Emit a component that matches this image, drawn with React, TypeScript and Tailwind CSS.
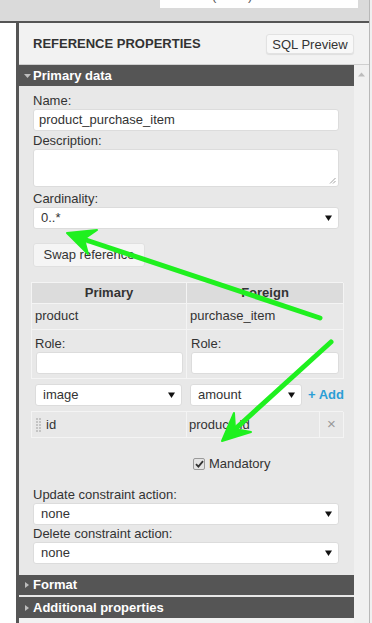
import React from "react";

const Caret = () => (
  <svg width="7" height="6" viewBox="0 0 7 6" className="shrink-0">
    <path d="M0 0.5h7L3.5 6z" fill="#111" />
  </svg>
);

const Select = ({ value, className = "" }: { value: string; className?: string }) => (
  <div
    className={
      "flex h-[22px] shrink-0 items-center justify-between rounded-[3px] border border-[#dcdcdc] bg-white pl-[7px] pr-[6px] " +
      className
    }
  >
    <span>{value}</span>
    <Caret />
  </div>
);

const Label = ({ children, className = "" }: { children: React.ReactNode; className?: string }) => (
  <div className={"h-[16px] leading-[16px] " + className}>{children}</div>
);

const Input = ({ value = "", className = "" }: { value?: string; className?: string }) => (
  <div
    className={
      "flex h-[22px] items-center rounded-[3px] border border-[#dcdcdc] bg-white px-[5px] " + className
    }
  >
    {value}
  </div>
);

const Bar = ({ title, open }: { title: string; open?: boolean }) => (
  <div className="flex h-[20px] items-center bg-[#555] font-bold text-white">
    <span className="flex w-[14px] justify-center pl-[2px]">
      {open ? (
        <svg width="7" height="4" viewBox="0 0 7 4">
          <path d="M0 0h7L3.5 4z" fill="#bdbdbd" />
        </svg>
      ) : (
        <svg width="4" height="6" viewBox="0 0 4 6">
          <path d="M0 0v6L4 3z" fill="#bdbdbd" />
        </svg>
      )}
    </span>
    <span>{title}</span>
  </div>
);

const cell = "border-r border-b border-[#f4f4f4]";

export default function App() {
  return (
    <div className="relative h-[623px] w-[372px] overflow-hidden bg-[#f0f0f0] font-['Liberation_Sans',Arial,sans-serif] text-[13px] text-[#333]">
      <div className="flex h-full">
        <div className="flex w-[369px] flex-col">
          {/* top strip, the field above is scrolled mostly out of view */}
          <div className="h-[21px] bg-[#dadada]">
            <div className="ml-[160px] h-[8px] w-[198px] overflow-hidden bg-white">
              <div className="-mt-[11px] whitespace-nowrap pl-[52px] leading-[14px] text-[#555]">(varch)</div>
            </div>
          </div>
          <div className="h-[2px] bg-[#555]" />
          <div className="flex flex-1">
            <div className="w-[16px] bg-white" />
            <div className="w-[3px] bg-[#555]" />
            <div className="flex flex-1 flex-col bg-[#f2f2f2]">
              {/* header */}
              <div className="flex h-[42px] items-center justify-between border-b border-[#cfcfcf] pl-[14px] pr-[15px]">
                <span className="font-bold">REFERENCE PROPERTIES</span>
                <button className="h-[20px] w-[88px] rounded-[3px] border border-[#e2e2e2] bg-[#f8f8f8] text-[13px] shadow-[0_1px_1px_rgba(0,0,0,0.08)]">
                  SQL Preview
                </button>
              </div>
              <div className="flex flex-1">
                <div className="w-[335px]">
                  <div className="h-[21px] [&>div]:h-[21px]">
                    <Bar title="Primary data" open />
                  </div>
                  <div className="bg-[#e8e8e8] px-[14px] pb-[11px] pt-[7px]">
                    <Label>Name:</Label>
                    <Input value="product_purchase_item" className="w-[306px]" />
                    <Label className="mt-[2px]">Description:</Label>
                    <div className="relative h-[38px] w-[306px] rounded-[3px] border border-[#dcdcdc] bg-white">
                      <svg width="7" height="7" viewBox="0 0 7 7" className="absolute bottom-[2px] right-[2px]">
                        <path d="M1 6.5L6.5 1M4 6.5L6.5 4" stroke="#888" strokeWidth="0.8" />
                      </svg>
                    </div>
                    <Label className="mt-[4px]">Cardinality:</Label>
                    <Select value="0..*" className="w-[306px]" />
                    <button className="mt-[14px] flex h-[24px] w-[112px] items-center justify-center rounded-[3px] border border-[#e0e0e0] bg-[#f5f5f5] text-[13px]">
                      Swap reference
                    </button>

                    {/* table */}
                    <div className="-ml-[2px] mt-[15px] w-[312px] border-l border-t border-[#f4f4f4]">
                      <div className="grid h-[20px] grid-cols-[155px_157px] bg-[#dcdcdc] font-bold">
                        <div className={cell + " flex items-center justify-center"}>Primary</div>
                        <div className={cell + " flex items-center justify-center"}>Foreign</div>
                      </div>
                      <div className="grid h-[27px] grid-cols-[155px_157px]">
                        <div className={cell + " flex items-center pl-[3px]"}>product</div>
                        <div className={cell + " flex items-center pl-[3px]"}>purchase_item</div>
                      </div>
                      <div className="grid h-[49px] grid-cols-[155px_157px]">
                        <div className={cell + " pl-[3px] pr-[4px] pt-[6px]"}>
                          <Label>Role:</Label>
                          <Input className="ml-[1px] w-[147px]" />
                        </div>
                        <div className={cell + " pl-[4px] pr-[4px] pt-[6px]"}>
                          <Label>Role:</Label>
                          <Input className="w-[148px]" />
                        </div>
                      </div>
                    </div>
                    <div className="-ml-[2px] flex h-[32px] w-[312px] items-center">
                      <Select value="image" className="ml-[4px] w-[147px]" />
                      <Select value="amount" className="ml-[8px] w-[112px]" />
                      <span className="ml-[6px] shrink-0 whitespace-nowrap font-bold text-[#2b9ed6]">+ Add</span>
                    </div>
                    <div className="-ml-[2px] grid h-[27px] w-[312px] grid-cols-[155px_133px_24px] border-l border-t border-[#f4f4f4]">
                      <div className={cell + " flex items-center pl-[4px]"}>
                        <span className="grid grid-cols-[2px_2px] gap-x-[1px] gap-y-[1px]">
                          {Array.from({ length: 10 }).map((_, i) => (
                            <span key={i} className="h-[2px] w-[2px] bg-[#c4c4c4]" />
                          ))}
                        </span>
                        <span className="ml-[5px]">id</span>
                      </div>
                      <div className={cell + " flex items-center pl-[2px]"}>product_id</div>
                      <div className={cell + " flex items-center justify-center text-[15px] text-[#999]"}>×</div>
                    </div>

                    <div className="-ml-[2px] mt-[16px] grid h-[16px] w-[312px] grid-cols-[155px_157px]">
                      <div />
                      <div className="flex items-center pl-[7px]">
                        <span className="flex h-[12px] w-[12px] items-center justify-center rounded-[2px] border border-[#9a9a9a] bg-[#e4e4e4]">
                          <svg width="9" height="8" viewBox="0 0 9 8">
                            <path d="M1 4.2L3.4 6.6L8 1.2" stroke="#333" strokeWidth="1.8" fill="none" />
                          </svg>
                        </span>
                        <span className="ml-[4px]">Mandatory</span>
                      </div>
                    </div>

                    <Label className="mt-[17px]">Update constraint action:</Label>
                    <Select value="none" className="w-[306px]" />
                    <Label className="mt-[1px]">Delete constraint action:</Label>
                    <Select value="none" className="w-[306px]" />
                  </div>
                  <Bar title="Format" />
                  <div className="h-[2px] bg-[#e8e8e8]" />
                  <div className="[&>div]:h-[21px]">
                    <Bar title="Additional properties" />
                  </div>
                </div>
                <div className="w-[15px] bg-[#f0f0f0] pt-[7px]">
                  <svg width="15" height="5" viewBox="0 0 15 5">
                    <path d="M4 4.5h7L7.5 0.5z" fill="#bcbcbc" />
                  </svg>
                </div>
              </div>
            </div>
          </div>
        </div>
        <div className="w-px bg-[#b8b8b8]" />
        <div className="flex-1 bg-[#f0f0f0]" />
      </div>

      {/* annotation arrows */}
      <svg className="pointer-events-none absolute left-0 top-0" width="372" height="623" viewBox="0 0 372 623">
        <g fill="#1ff01f" stroke="#1ff01f" strokeLinecap="round" strokeLinejoin="round">
          <line x1="320" y1="318" x2="80" y2="238" strokeWidth="5" />
          <path d="M67 233L97 230L84 239L88 254z" strokeWidth="2" />
          <line x1="331" y1="342" x2="233" y2="431" strokeWidth="5" />
          <path d="M222 441L251 432L235 429L234 413z" strokeWidth="2" />
        </g>
      </svg>
    </div>
  );
}
